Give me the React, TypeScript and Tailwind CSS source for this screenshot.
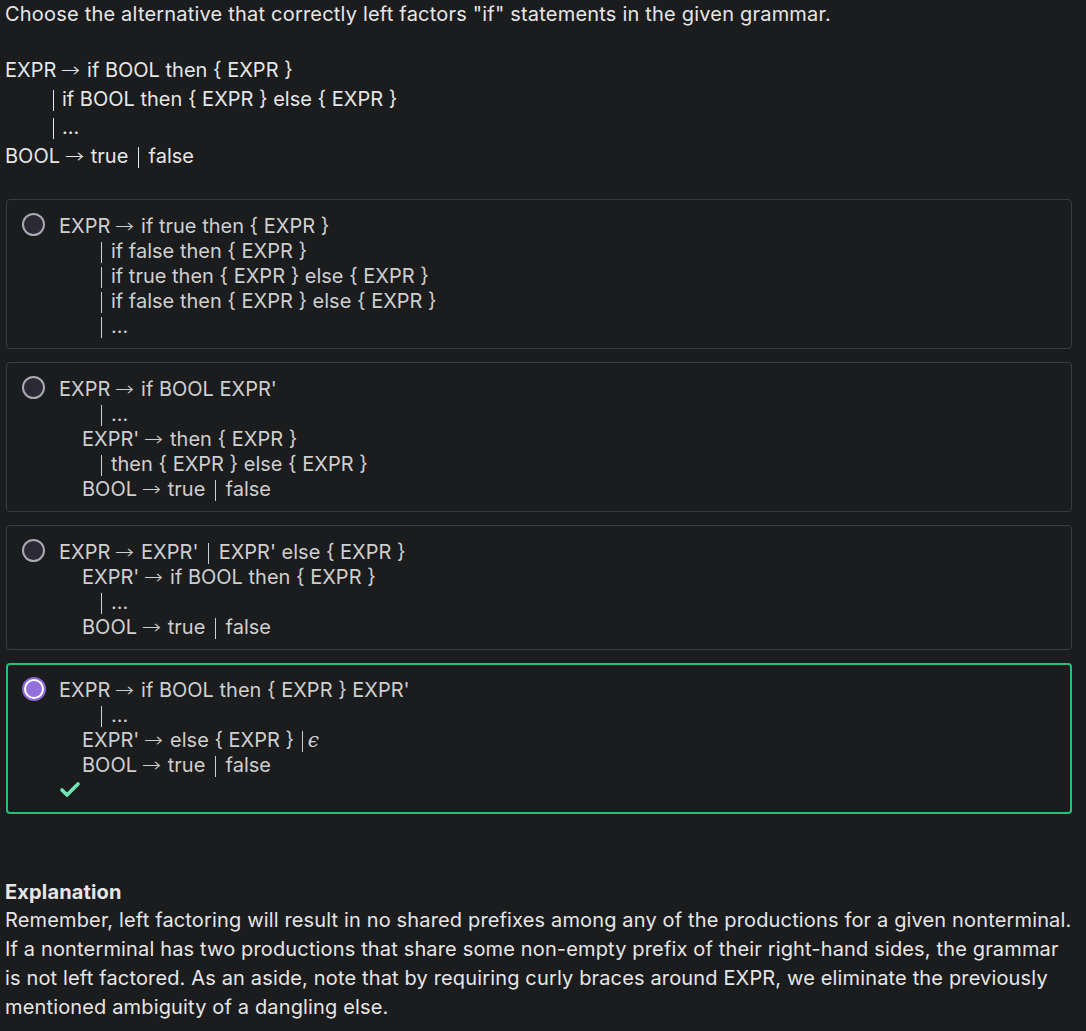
import React from "react";
import { Check } from "lucide-react";

const Bar = ({ className = "" }: { className?: string }) => (
  <span className={`inline-block w-px h-[21px] -my-[6px] bg-current align-middle ${className}`} />
);

const Arrow = () => (
  <span
    className="ml-[6px] mr-[8px] inline-block scale-x-[1.15] leading-[0] tracking-normal font-extralight"
    style={{ fontFamily: "'DejaVu Sans', sans-serif" }}
  >
    →
  </span>
);

type Line = { indent: number; bar?: boolean; content: React.ReactNode };

const Radio = ({ selected }: { selected?: boolean }) =>
  selected ? (
    <span className="-mt-[1px] box-border block h-[24px] w-[24px] shrink-0 rounded-full bg-[#8c67d6] p-[2px]">
      <span className="block h-full w-full rounded-full border-2 border-white bg-[#9370db]" />
    </span>
  ) : (
    <span className="-mt-[1px] box-border block h-[23px] w-[23px] shrink-0 rounded-full border-2 border-[#a9a9b1] bg-[#2b2a34]" />
  );

const Option = ({
  lines,
  selected,
  correct,
}: {
  lines: Line[];
  selected?: boolean;
  correct?: boolean;
}) => (
  <div
    className={`ml-px rounded-[4px] flex ${
      correct
        ? "border-2 border-[#23c27c] pt-[13px] pb-[9px] pl-[14px] gap-[13px]"
        : "border border-[#3b3c3f] pt-[14px] pb-[9px] pl-[15px] gap-[14px]"
    }`}
  >
    <Radio selected={selected} />
    <div className="text-[20px] leading-[25px] text-[#cfcfcf]">
      {lines.map((l, i) => (
        <div key={i} className="h-[25px] whitespace-nowrap" style={{ paddingLeft: l.indent }}>
          {l.bar && <Bar className="mr-[9px]" />}
          {l.content}
        </div>
      ))}
      {correct && (
        <div className="h-[25px] flex items-center">
          <Check size={24} strokeWidth={3.6} className="text-[#6ee7b7] -ml-px" />
        </div>
      )}
    </div>
  </div>
);

const TF = () => (
  <>
    BOOL<Arrow />true <Bar className="mx-[4px]" /> false
  </>
);

export default function App() {
  return (
    <div
      className="min-h-[1031px] bg-[#1b1c1e] pl-[5px] pr-[14px] text-[#e6e6e6]"
      style={{ fontFamily: "Inter, 'Noto Sans', sans-serif" }}
    >
      <p className="text-[20px] leading-[28.8px] tracking-[0.2px]">
        Choose the alternative that correctly left factors "if" statements in the given grammar.
      </p>
      <div className="mt-[27px] text-[20px] leading-[28.7px]">
        <div>
          EXPR<Arrow />if BOOL then {"{"} EXPR {"}"}
        </div>
        <div className="pl-[48px]">
          <Bar className="mr-[8px]" />
          if BOOL then {"{"} EXPR {"}"} else {"{"} EXPR {"}"}
        </div>
        <div className="pl-[48px]">
          <Bar className="mr-[8px]" />
          ...
        </div>
        <div>
          <TF />
        </div>
      </div>

      <div className="mt-[28px] flex flex-col gap-[13px]">
        <Option
          lines={[
            { indent: 0, content: <>EXPR<Arrow />if true then {"{"} EXPR {"}"}</> },
            { indent: 42, bar: true, content: <>if false then {"{"} EXPR {"}"}</> },
            { indent: 42, bar: true, content: <>if true then {"{"} EXPR {"}"} else {"{"} EXPR {"}"}</> },
            { indent: 42, bar: true, content: <>if false then {"{"} EXPR {"}"} else {"{"} EXPR {"}"}</> },
            { indent: 42, bar: true, content: <>...</> },
          ]}
        />
        <Option
          lines={[
            { indent: 0, content: <>EXPR<Arrow />if BOOL EXPR'</> },
            { indent: 42, bar: true, content: <>...</> },
            { indent: 23, content: <>EXPR'<Arrow />then {"{"} EXPR {"}"}</> },
            { indent: 42, bar: true, content: <>then {"{"} EXPR {"}"} else {"{"} EXPR {"}"}</> },
            { indent: 23, content: <TF /> },
          ]}
        />
        <Option
          lines={[
            {
              indent: 0,
              content: (
                <>
                  EXPR<Arrow />EXPR' <Bar className="mx-[4px]" /> EXPR' else {"{"} EXPR {"}"}
                </>
              ),
            },
            { indent: 23, content: <>EXPR'<Arrow />if BOOL then {"{"} EXPR {"}"}</> },
            { indent: 42, bar: true, content: <>...</> },
            { indent: 23, content: <TF /> },
          ]}
        />
        <Option
          selected
          correct
          lines={[
            { indent: 0, content: <>EXPR<Arrow />if BOOL then {"{"} EXPR {"}"} EXPR'</> },
            { indent: 42, bar: true, content: <>...</> },
            {
              indent: 23,
              content: (
                <>
                  EXPR'<Arrow />else {"{"} EXPR {"}"} <Bar className="ml-[2px] mr-[5px]" />
                  <span className="italic leading-[0]" style={{ fontFamily: "'DejaVu Serif', serif" }}>
                    ϵ
                  </span>
                </>
              ),
            },
            { indent: 23, content: <TF /> },
          ]}
        />
      </div>

      <div className="mt-[64px] text-[20px] leading-[28.8px] tracking-[0.15px]">
        <div className="font-bold">Explanation</div>
        <p>
          Remember, left factoring will result in no shared prefixes among any of the productions for a given
          nonterminal. If a nonterminal has two productions that share some non-empty prefix of their right-hand
          sides, the grammar is not left factored. As an aside, note that by requiring curly braces around EXPR, we
          eliminate the previously mentioned ambiguity of a dangling else.
        </p>
      </div>
    </div>
  );
}
